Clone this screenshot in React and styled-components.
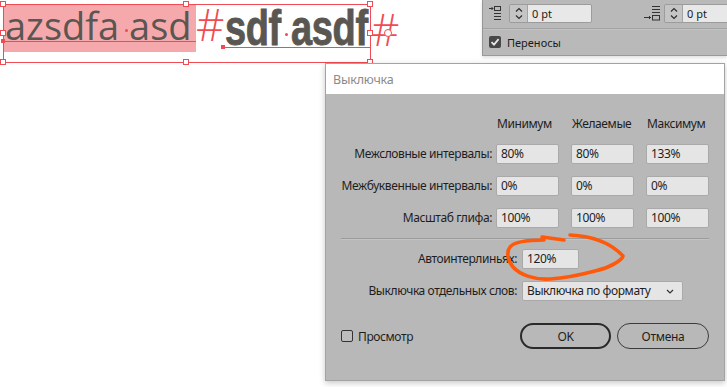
import React from 'react';
import styled, { createGlobalStyle } from 'styled-components';

const GlobalStyle = createGlobalStyle`
  html, body {
    margin: 0;
    padding: 0;
    background: #fff;
  }
  body {
    width: 727px;
    height: 387px;
    overflow: hidden;
    font-family: "Noto Sans", "Open Sans", sans-serif;
  }
  * { box-sizing: border-box; }
`;

const RED = '#f04b52';

const Page = styled.div`
	position: relative;
	width: 727px;
	height: 387px;
	overflow: hidden;
	background: #fff;
`;

/* canvas: the text frame on the layout page */
const Canvas = styled.div`
	position: absolute;
	left: 0;
	top: 0;
	width: 420px;
	height: 70px;
`;

const Highlight = styled.div`
	position: absolute;
	left: 3px;
	top: 4px;
	width: 193px;
	height: 48px;
	background: #f5a9ad;
`;

const Frame = styled.div`
	position: absolute;
	left: 3px;
	top: 4px;
	width: 368px;
	height: 59px;
	border: 1px solid ${RED};
`;

const Handle = styled.div`
	position: absolute;
	left: ${(p) => p.x - 3}px;
	top: ${(p) => p.y - 3}px;
	width: 6px;
	height: 6px;
	background: #fff;
	border: 1px solid ${RED};
`;

const Port = styled.div`
	position: absolute;
	left: 384px;
	top: 29px;
	width: 8px;
	height: 8px;
	border-radius: 50%;
	background: #fff;
	border: 1px solid ${RED};
`;

const Rule = styled.div`
	position: absolute;
	left: ${(p) => p.x}px;
	top: ${(p) => p.y}px;
	width: ${(p) => p.w}px;
	height: 1px;
	background: ${RED};
`;

const Anchor = styled.div`
	position: absolute;
	left: ${(p) => p.x}px;
	top: ${(p) => p.y}px;
	width: 4px;
	height: 4px;
	background: ${RED};
`;

const SpaceDot = styled.div`
	position: absolute;
	left: ${(p) => p.x - 1.5}px;
	top: ${(p) => p.y - 1.5}px;
	width: 3px;
	height: 3px;
	border-radius: 50%;
	background: ${RED};
`;

const Story = styled.div`
	position: absolute;
	left: ${(p) => p.x}px;
	top: ${(p) => p.y}px;
	white-space: pre;
	color: #5a5651;
	line-height: 1;
	font-family: "Open Sans", sans-serif;
	font-size: 38px;
`;

/* heavy condensed face: bold sans squeezed horizontally */
const HeavyStory = styled(Story)`
	font-family: "Liberation Sans", "Arial", sans-serif;
	font-weight: 700;
	font-size: 50px;
	letter-spacing: -0.5px;
	transform: scaleX(0.76);
	transform-origin: left top;
	-webkit-text-stroke: 0.9px #5a5651;
`;

const EndMark = styled.div`
	position: absolute;
	left: ${(p) => p.x}px;
	top: ${(p) => p.y}px;
	color: ${RED};
	font-family: "Open Sans", sans-serif;
	font-weight: 300;
	font-size: 44px;
	line-height: 1;
`;

/* top right paragraph panel */
const Panel = styled.div`
	position: absolute;
	left: 482px;
	top: 0;
	width: 245px;
	height: 56px;
	background: #b9b9b9;
	border-left: 1px solid #979797;
	border-bottom: 1px solid #9a9a9a;
	box-shadow: 0 2px 3px rgba(0, 0, 0, 0.12);
	overflow: hidden;
	display: flex;
	flex-direction: column;
	font-size: 11px;
	color: #1b1b1b;
`;

const PanelRow = styled.div`
	display: flex;
	align-items: center;
	height: ${(p) => p.h}px;
	padding-left: 6px;
	flex-shrink: 0;
`;

const PanelDivider = styled.div`
	height: 2px;
	margin-top: 2px;
	border-top: 1px solid #a2a2a2;
	border-bottom: 1px solid #c2c2c2;
	flex-shrink: 0;
`;

const FieldGroup = styled.div`
	display: flex;
	align-items: center;
	gap: ${(p) => p.gap}px;
	width: ${(p) => p.w}px;
	flex-shrink: 0;
`;

const Spinner = styled.div`
	display: flex;
	width: 83px;
	height: 19px;
	border: 1px solid #9c9c9c;
	border-radius: 2px;
	overflow: hidden;
	flex-shrink: 0;
`;

const SpinButton = styled.div`
	width: 18px;
	display: flex;
	align-items: center;
	justify-content: center;
	background: #c5c5c5;
	border-right: 1px solid #a4a4a4;
`;

const SpinValue = styled.div`
	flex: 1;
	background: #e8e8e8;
	padding-left: 4px;
	line-height: 17px;
	font-size: 11px;
`;

const PanelCheck = styled.div`
	width: 12px;
	height: 12px;
	border-radius: 2px;
	background: #474747;
	display: flex;
	align-items: center;
	justify-content: center;
	margin-right: 6px;
`;

/* justification dialog */
const Dialog = styled.div`
	position: absolute;
	left: 325px;
	top: 63px;
	width: 400px;
	height: 318px;
	border: 1px solid #a3a3a3;
	background: #b8b8b8;
	box-shadow: 0 2px 6px rgba(0, 0, 0, 0.22);
	display: flex;
	flex-direction: column;
	font-size: 12px;
	letter-spacing: -0.4px;
	color: #1e1e1e;
`;

const TitleBar = styled.div`
	height: 30px;
	background: #fff;
	padding-left: 7px;
	display: flex;
	align-items: center;
	color: #8a8a8a;
	font-size: 12.5px;
	letter-spacing: -0.2px;
	flex-shrink: 0;
`;

const Body = styled.div`
	padding: 22px 15px 0;
	display: flex;
	flex-direction: column;
`;

const MetricsGrid = styled.div`
	display: grid;
	grid-template-columns: 155px 75px 75px 63px;
	grid-template-rows: 16px repeat(3, 20px);
	row-gap: 12px;
	align-items: center;
`;

const ColHead = styled.div`
	padding-left: 1px;
	line-height: 16px;
`;

const Label = styled.div`
	text-align: right;
	padding-right: 4px;
	white-space: nowrap;
	line-height: 20px;
`;

const Field = styled.div`
	width: ${(p) => p.w || 63}px;
	height: 20px;
	background: #e5e5e5;
	border: 1px solid #a9a9a9;
	border-radius: 2px;
	padding-left: 4px;
	line-height: 18px;
	display: flex;
	align-items: center;
	justify-content: space-between;
	padding-right: 8px;
`;

const Separator = styled.div`
	margin-top: 10px;
	height: 2px;
	border-top: 1px solid #9b9b9b;
	border-bottom: 1px solid #c3c3c3;
`;

const OptionsGrid = styled.div`
	display: grid;
	grid-template-columns: 181px auto;
	grid-auto-rows: 20px;
	row-gap: 12px;
	margin-top: 9px;
	align-items: center;
	justify-items: start;
	& > ${Label} {
		justify-self: stretch;
		padding-right: 5px;
	}
`;

const Footer = styled.div`
	margin-top: 22px;
	height: 26px;
	display: flex;
	align-items: center;
	justify-content: space-between;
`;

const Preview = styled.label`
	display: flex;
	align-items: center;
	gap: 5px;
`;

const Box = styled.span`
	width: 12px;
	height: 12px;
	border: 1px solid #333;
	border-radius: 2px;
	background: #bdbdbd;
`;

const Buttons = styled.div`
	display: flex;
	gap: 6px;
`;

const Button = styled.button`
	width: ${(p) => (p.primary ? 91 : 92)}px;
	height: 26px;
	border-radius: 13px;
	border: ${(p) => (p.primary ? '2px solid #2a2a2a' : '1px solid #3b3b3b')};
	background: transparent;
	font-family: "Noto Sans", sans-serif;
	font-size: 12px;
	letter-spacing: -0.3px;
	color: #1e1e1e;
	padding: 0;
`;

const Scribble = styled.svg`
	position: absolute;
	left: 500px;
	top: 230px;
	width: 135px;
	height: 55px;
	overflow: visible;
`;

const IndentLeftIcon = () => (
	<svg width="12" height="16" viewBox="0 0 12 16" fill="none" stroke="#333" strokeWidth="1">
		<path d="M0 3.5h4M2.5 2l1.5 1.5L2.5 5" />
		<rect x="5.5" y="1.5" width="6" height="4" />
		<path d="M5 8.5h7M5 11.5h7M5 14.5h7" />
	</svg>
);

const SpaceAfterIcon = () => (
	<svg width="18" height="16" viewBox="0 0 18 16" fill="none" stroke="#333" strokeWidth="1">
		<path d="M9 1.5h8M9 4.5h8M9 7.5h8" />
		<rect x="9.5" y="10.5" width="7" height="4.5" />
		<path d="M1 12.5h7M6 11l1.5 1.5L6 14" />
	</svg>
);

const Chevrons = () => (
	<svg width="10" height="17" viewBox="0 0 10 17" fill="none" stroke="#2d2d2d" strokeWidth="1.2">
		<path d="M2 6.5L5 3.5L8 6.5M2 10.5L5 13.5L8 10.5" />
	</svg>
);

const Check = () => (
	<svg width="10" height="10" viewBox="0 0 10 10" fill="none" stroke="#e8e8e8" strokeWidth="1.8">
		<path d="M1.5 5.2L4 7.6L8.6 2.2" />
	</svg>
);

const SelectArrow = () => (
	<svg width="8" height="5" viewBox="0 0 8 5" fill="none" stroke="#333" strokeWidth="1.2">
		<path d="M1 1l3 3 3-3" />
	</svg>
);

const handles = [
	[3, 4], [186, 4], [370, 4],
	[3, 33], [370, 33],
	[3, 62], [186, 62], [370, 62]
];

const rows = [
	[ 'Межсловные интервалы:', '80%', '80%', '133%' ],
	[ 'Межбуквенные интервалы:', '0%', '0%', '0%' ],
	[ 'Масштаб глифа:', '100%', '100%', '100%' ]
];

const App = () => {
	return (
		<Page>
			<GlobalStyle />
			<Canvas>
				<Highlight />
				<Rule x={3} y={41} w={193} />
				<Rule x={223} y={47} w={148} />
				<Story x={5} y={6}>azsdfa asd</Story>
				<EndMark x={196} y={2}>#</EndMark>
				<HeavyStory x={225} y={3}>sdf asdf</HeavyStory>
				<EndMark x={371} y={7}>#</EndMark>
				<SpaceDot x={126} y={30} />
				<SpaceDot x={286} y={34} />
				<Frame />
				<Anchor x={1} y={39} />
				<Anchor x={221} y={45} />
				{handles.map(([ x, y ], i) => <Handle key={i} x={x} y={y} />)}
				<Port />
			</Canvas>

			<Panel>
				<PanelRow h={26}>
					<FieldGroup w={154} gap={8}>
						<IndentLeftIcon />
						<Spinner>
							<SpinButton><Chevrons /></SpinButton>
							<SpinValue>0 pt</SpinValue>
						</Spinner>
					</FieldGroup>
					<FieldGroup w={110} gap={3}>
						<SpaceAfterIcon />
						<Spinner>
							<SpinButton><Chevrons /></SpinButton>
							<SpinValue>0 pt</SpinValue>
						</Spinner>
					</FieldGroup>
				</PanelRow>
				<PanelDivider />
				<PanelRow h={24}>
					<PanelCheck><Check /></PanelCheck>
					Переносы
				</PanelRow>
			</Panel>

			<Dialog>
				<TitleBar>Выключка</TitleBar>
				<Body>
					<MetricsGrid>
						<span />
						<ColHead>Минимум</ColHead>
						<ColHead>Желаемые</ColHead>
						<ColHead>Максимум</ColHead>
						{rows.map((r) => (
							<React.Fragment key={r[0]}>
								<Label>{r[0]}</Label>
								<Field>{r[1]}</Field>
								<Field>{r[2]}</Field>
								<Field>{r[3]}</Field>
							</React.Fragment>
						))}
					</MetricsGrid>
					<Separator />
					<OptionsGrid>
						<Label>Автоинтерлиньях:</Label>
						<Field w={57}>120%</Field>
						<Label>Выключка отдельных слов:</Label>
						<Field w={161}>
							Выключка по формату
							<SelectArrow />
						</Field>
					</OptionsGrid>
					<Footer>
						<Preview>
							<Box />
							Просмотр
						</Preview>
						<Buttons>
							<Button primary>OK</Button>
							<Button>Отмена</Button>
						</Buttons>
					</Footer>
				</Body>
			</Dialog>

			<Scribble viewBox="0 0 135 55" fill="none" stroke="#ff5a0a" strokeWidth="3.6" strokeLinecap="round" strokeLinejoin="round">
				<path d="M42 7L64 10" />
				<path d="M70 5C90 6 110 12 123 26C122 30 110 38 95 41C80 45 65 48 50 49C35 50 20 45 13 37C8 31 6 22 10 17C14 12 28 10 44 10" />
			</Scribble>
		</Page>
	);
};

export default App;
